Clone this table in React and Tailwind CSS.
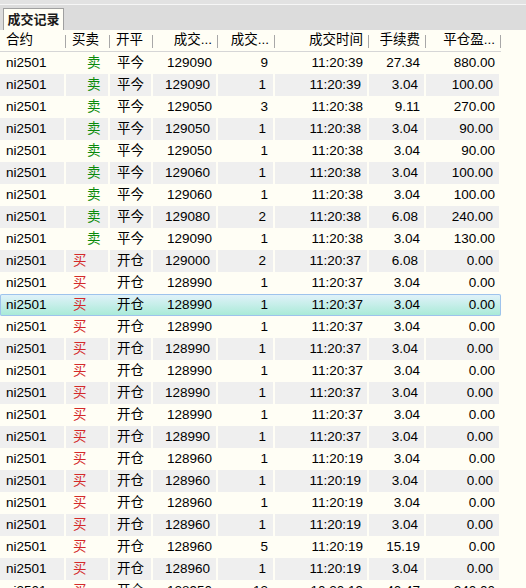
import React from "react";

const cols = "grid grid-cols-[66px_44px_43px_65px_57px_94px_57px_75px] w-[501px]";

const buy = { side: "买", kind: "开仓" };
const sell = { side: "卖", kind: "平今" };

const trades = [
    [sell, "129090", "9", "11:20:39", "27.34", "880.00"],
    [sell, "129090", "1", "11:20:39", "3.04", "100.00"],
    [sell, "129050", "3", "11:20:38", "9.11", "270.00"],
    [sell, "129050", "1", "11:20:38", "3.04", "90.00"],
    [sell, "129050", "1", "11:20:38", "3.04", "90.00"],
    [sell, "129060", "1", "11:20:38", "3.04", "100.00"],
    [sell, "129060", "1", "11:20:38", "3.04", "100.00"],
    [sell, "129080", "2", "11:20:38", "6.08", "240.00"],
    [sell, "129090", "1", "11:20:38", "3.04", "130.00"],
    [buy, "129000", "2", "11:20:37", "6.08", "0.00"],
    [buy, "128990", "1", "11:20:37", "3.04", "0.00"],
    [buy, "128990", "1", "11:20:37", "3.04", "0.00"],
    [buy, "128990", "1", "11:20:37", "3.04", "0.00"],
    [buy, "128990", "1", "11:20:37", "3.04", "0.00"],
    [buy, "128990", "1", "11:20:37", "3.04", "0.00"],
    [buy, "128990", "1", "11:20:37", "3.04", "0.00"],
    [buy, "128990", "1", "11:20:37", "3.04", "0.00"],
    [buy, "128990", "1", "11:20:37", "3.04", "0.00"],
    [buy, "128960", "1", "11:20:19", "3.04", "0.00"],
    [buy, "128960", "1", "11:20:19", "3.04", "0.00"],
    [buy, "128960", "1", "11:20:19", "3.04", "0.00"],
    [buy, "128960", "1", "11:20:19", "3.04", "0.00"],
    [buy, "128960", "5", "11:20:19", "15.19", "0.00"],
    [buy, "128960", "1", "11:20:19", "3.04", "0.00"],
    [buy, "128950", "13", "10:20:19", "40.47", "240.00"],
];

const SELECTED = 11;

function HeaderCell({ children, right }) {
    return (
        <div className={`relative flex items-center h-full ${right ? "justify-end pr-[6px]" : "pl-[6px]"}`}>
            <span className="truncate">{children}</span>
            <span className="absolute right-0 top-[5px] h-[13px] w-px bg-[#a8a8a8]" />
        </div>
    );
}

export default function App() {
    return (
        <div
            className="w-[526px] h-[588px] overflow-hidden bg-[#fffef5] text-black text-[13.5px]"
            style={{ fontFamily: '"Liberation Sans", Arial, "Noto Sans CJK SC", sans-serif' }}
        >
            {/* tab strip */}
            <div className="h-[30px] bg-[#dcdcdc] flex flex-col">
                <div className="h-[4px] bg-[#e2e2e2]" />
                <div className="h-[1px] bg-[#f6f6f6]" />
                <div className="flex-1 flex items-end pl-[3px]">
                    <div className="h-[22px] w-[61px] border border-b-0 border-[#a0a0a0] bg-[#fffef5] flex items-center justify-center text-[13px] font-bold text-[#1a1a1a]">
                        成交记录
                    </div>
                </div>
            </div>

            {/* header */}
            <div className={`${cols} h-[22px] border-b border-[#d6d6d6]`}>
                <HeaderCell>合约</HeaderCell>
                <HeaderCell>买卖</HeaderCell>
                <HeaderCell>开平</HeaderCell>
                <HeaderCell right>成交...</HeaderCell>
                <HeaderCell right>成交...</HeaderCell>
                <HeaderCell right>成交时间</HeaderCell>
                <HeaderCell right>手续费</HeaderCell>
                <HeaderCell right>平仓盈...</HeaderCell>
            </div>

            {/* rows */}
            {trades.map(([t, price, qty, time, fee, pnl], i) => {
                const selected = i === SELECTED;
                const gray = i % 2 === 1;
                const cell = `h-full flex items-center pt-[1px] ${
                    gray && !selected ? "bg-[#efefef] border-r-2 border-[#fffef5]" : ""
                }`;
                const isBuy = t.side === "买";
                return (
                    <div
                        key={i}
                        className={`${cols} h-[22px] ${
                            selected
                                ? "bg-gradient-to-b from-[#e2f2fb] to-[#a6ead6] shadow-[inset_0_0_0_1px_#9ec3ec] rounded-[2px]"
                                : ""
                        }`}
                    >
                        <div className={`${cell} pl-[6px]`}>ni2501</div>
                        <div
                            className={`${cell} ${
                                isBuy ? "pl-[7px] text-[#d42a2a]" : "pl-[21px] text-[#0a8a0a]"
                            }`}
                        >
                            {t.side}
                        </div>
                        <div className={`${cell} pl-[7px]`}>{t.kind}</div>
                        <div className={`${cell} justify-end pr-[6px]`}>{price}</div>
                        <div className={`${cell} justify-end pr-[7px]`}>{qty}</div>
                        <div className={`${cell} justify-end pr-[6px]`}>{time}</div>
                        <div className={`${cell} justify-end pr-[6px]`}>{fee}</div>
                        <div className={`${cell} justify-end pr-[6px]`}>{pnl}</div>
                    </div>
                );
            })}
        </div>
    );
}
